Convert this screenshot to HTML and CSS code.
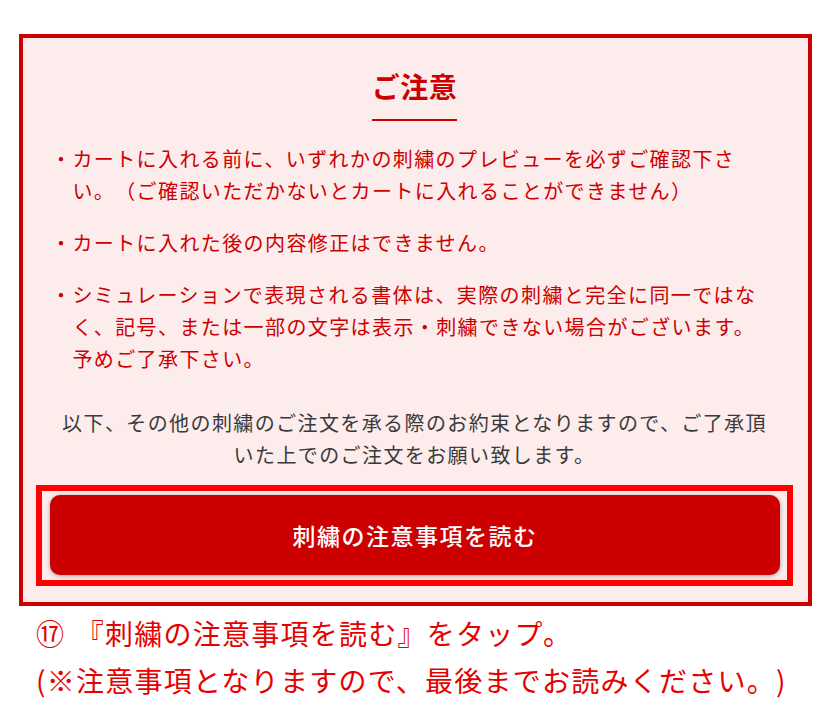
FILE: index.html
```html
<!DOCTYPE html>
<html lang="ja">
<head>
<meta charset="UTF-8" />
<meta name="viewport" content="width=device-width, initial-scale=1.0" />
<title>ご注意</title>
<link rel="stylesheet" href="styles.css">
</head>
<body>
  <div class="notice">
    <div class="notice-head">
      <h2>ご注意</h2>
    </div>

    <!-- 注意事項リスト -->
    <ul class="notice-list">
      <li>・カートに入れる前に、いずれかの刺繍のプレビューを必ずご確認下さい。（ご確認いただかないとカートに入れることができません）</li>
      <li>・カートに入れた後の内容修正はできません。</li>
      <li>・シミュレーションで表現される書体は、実際の刺繍と完全に同一ではなく、記号、または一部の文字は表示・刺繍できない場合がございます。予めご了承下さい。</li>
    </ul>

    <p class="notice-text">以下、その他の刺繍のご注文を承る際のお約束となりますので、ご了承頂いた上でのご注文をお願い致します。</p>

    <div class="btn-frame">
      <a class="btn-read" href="#">刺繍の注意事項を読む</a>
    </div>
  </div><!-- /.notice -->

  <p class="caption"><span class="step">⑰</span> 『刺繍の注意事項を読む』をタップ。<br>(※注意事項となりますので、最後までお読みください。)</p>
</body>
</html>
```

FILE: styles.css
```css
:root {
  --clr-red: #cc0000;
  --clr-bright: #ff0000;
  --clr-caption: #e60000;
  --clr-bg-notice: #fdecec;
  --clr-text: #3a3a3a;
}

body {
  margin: 0;
  background: #fff;
  font-family: "Noto Sans CJK JP", "Noto Sans", sans-serif;
  text-spacing-trim: space-all;
}

/* --- Notice box --- */
.notice {
  margin: 34px 16px 0 19px;
  border: 4px solid var(--clr-red);
  background: var(--clr-bg-notice);
  padding: 28px 15px 16px 13px;
}

.notice-head {
  text-align: center;
}
.notice-head h2 {
  display: inline-block;
  margin: 0;
  padding-bottom: 13px;
  border-bottom: 2px solid var(--clr-red);
  color: var(--clr-red);
  font-size: 28px;
  line-height: 40px;
  font-weight: bold;
  letter-spacing: 0.5px;
}

.notice-list {
  list-style: none;
  margin: 22px 0 0;
  padding: 0 22px 0 15px;
  color: var(--clr-red);
  font-size: 20px;
  line-height: 32px;
  letter-spacing: 1.4px;
}
.notice-list li {
  padding-left: 21.4px;
  text-indent: -21.4px;
}
.notice-list li + li {
  margin-top: 20px;
}

.notice-text {
  margin: 32px 0 0;
  padding: 0 20px;
  color: var(--clr-text);
  text-align: center;
  font-size: 20px;
  line-height: 32px;
  letter-spacing: 1.4px;
}

/* --- Button --- */
.btn-frame {
  margin-top: 14px;
  border: 6px solid var(--clr-bright);
  padding: 4px 7px 5px 8px;
}
.btn-read {
  display: flex;
  align-items: center;
  justify-content: center;
  height: 80px;
  background: var(--clr-red);
  border-radius: 10px;
  box-shadow: 0 1px 4px rgba(0,0,0,.35);
  color: #fff;
  font-size: 23px;
  font-weight: 500;
  letter-spacing: 1.5px;
  text-decoration: none;
}

/* --- Caption under the box --- */
.caption {
  margin: 4px 0 0 36px;
  color: var(--clr-caption);
  font-size: 28px;
  line-height: 47px;
  letter-spacing: 1.25px;
}
.caption .step {
  margin-right: 3px;
}
```
